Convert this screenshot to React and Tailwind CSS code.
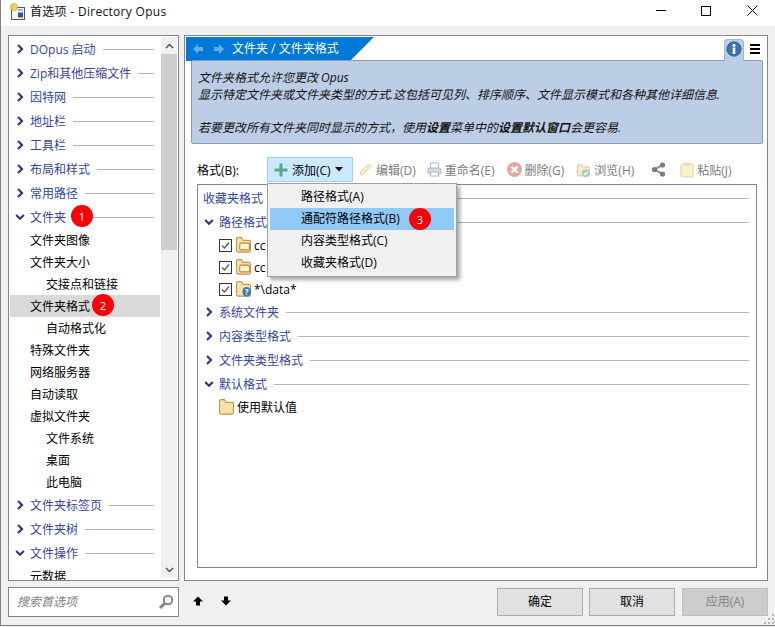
import React from "react";

const Chevron = ({ open }) => (
  <svg width="10" height="10" viewBox="0 0 10 10" className="shrink-0">
    {open ? (
      <path d="M1.2 3 L5 6.8 L8.8 3" fill="none" stroke="#2a3b80" strokeWidth="2.2" />
    ) : (
      <path d="M3 1 L7 5 L3 9" fill="none" stroke="#2a3b80" strokeWidth="2.2" />
    )}
  </svg>
);

const Group = ({ label, open, cls = "" }) => (
  <div className={"flex items-center h-[24px] " + cls}>
    <span className="w-[21px] flex justify-center"><Chevron open={open} /></span>
    <span className="text-[#34459b] whitespace-nowrap pt-[2px]">{label}</span>
    <span className="flex-1 h-px bg-[#aab8d6] ml-[7px]" />
  </div>
);

const Badge = ({ n, cls }) => (
  <span className={"absolute w-[22px] h-[22px] rounded-full bg-[#fb0007] text-white text-[11px] flex items-center justify-center " + cls}>{n}</span>
);

const FolderPath = "M1.5 3.5 V13 a1.2 1.2 0 0 0 1.2 1.2 H13.3 a1.2 1.2 0 0 0 1.2-1.2 V6 a1.2 1.2 0 0 0-1.2-1.2 H7.5 L6 2.5 H2.5 a1 1 0 0 0-1 1z";

const Folder = ({ inner, q }) => (
  <svg width="15" height="16" viewBox="1 2 14 13" className="shrink-0" preserveAspectRatio="none">
    <path d={FolderPath} fill="#f9e2a9" stroke="#c8954a" />
    {inner && <rect x="4.5" y="7" width="9" height="5.5" rx="1" fill="#fff3d2" stroke="#b9883e" />}
    {q && (
      <>
        <circle cx="11" cy="10.8" r="4" fill="#3c78b0" />
        <text x="11" y="13.6" fontSize="7.5" fontWeight="700" textAnchor="middle" fill="#fff">?</text>
      </>
    )}
  </svg>
);

const Check = () => (
  <span className="w-[13px] h-[13px] border border-[#333] bg-white flex items-center justify-center shrink-0">
    <svg width="11" height="11" viewBox="0 0 11 11"><path d="M2 5.5 L4.5 8 L9 2.5" fill="none" stroke="#555" strokeWidth="1.2" /></svg>
  </span>
);

const CheckRow = ({ text, inner, q }) => (
  <div className="flex items-center h-[22px] pl-[21px]">
    <Check />
    <span className="ml-[4px] flex"><Folder inner={inner} q={q} /></span>
    <span className="ml-[3px] text-black whitespace-nowrap pt-[2px]">{text}</span>
  </div>
);

const Tool = ({ icon, label, cls = "" }) => (
  <div className={"flex items-center gap-[3px] text-[#7c7c7c] whitespace-nowrap " + cls}>
    <span className="w-[15px] h-[16px] flex items-center justify-center">{icon}</span>
    {label && <span className="pt-[2px]">{label}</span>}
  </div>
);

const Btn = ({ label, disabled, cls = "" }) => (
  <div className={"w-[86px] h-[28px] border flex items-center justify-center " + cls + " " + (disabled ? "bg-[#cccccc] border-[#bfbfbf] text-[#838383]" : "bg-[#e1e1e1] border-[#adadad] text-black")}>{label}</div>
);

const item = "flex items-center h-[22px] pt-[2px] whitespace-nowrap text-black ";

export default function App() {
  return (
    <div className="w-[775px] h-[627px] overflow-hidden bg-[#f0f0f0] font-['Open_Sans','Noto_Sans_CJK_SC',sans-serif] text-[12px] leading-none">
      <div className="h-[626px] relative border-l border-b border-[#7f7f7f] flex flex-col">
        {/* title bar */}
        <div className="h-[26px] bg-white flex items-center shrink-0 pb-[2px]">
          <svg width="18" height="18" viewBox="0 0 18 18" className="ml-[8px]">
            <rect x="2.5" y="4.5" width="13" height="12" fill="#f4f4f4" stroke="#555" />
            <rect x="9" y="9.5" width="5" height="5" fill="#2c5f9e" />
            <rect x="9" y="6" width="5" height="2" fill="#9db8d8" />
            <circle cx="5" cy="4" r="3.6" fill="#f0cf5c" stroke="#b69a3a" strokeWidth="0.6" />
          </svg>
          <span className="ml-[3px] text-[#111] tracking-[0.3px]">首选项 - Directory Opus</span>
          <div className="ml-auto flex items-center mb-[3px]">
            <span className="w-[10px] h-px bg-black mr-[35px]" />
            <span className="w-[10px] h-[10px] border border-black mr-[36px]" />
            <svg width="11" height="11" viewBox="0 0 11 11" className="mr-[17px]"><path d="M0.5 0.5 L10.5 10.5 M10.5 0.5 L0.5 10.5" stroke="#111" strokeWidth="1" /></svg>
          </div>
        </div>

        {/* panels */}
        <div className="flex mt-[9px] ml-[7px] gap-[5px] h-[546px] shrink-0">
          {/* left tree */}
          <div className="w-[171px] h-full border border-[#82878f] bg-white flex overflow-hidden">
            <div className="w-[152px] shrink-0 pt-px">
              {["DOpus 启动", "Zip和其他压缩文件", "因特网", "地址栏", "工具栏", "布局和样式", "常用路径"].map((t) => (
                <Group key={t} label={t} cls="pr-[7px]" />
              ))}
              <Group label="文件夹" open cls="pr-[7px]" />
              <div className={item + "pl-[21px]"}>文件夹图像</div>
              <div className={item + "pl-[21px]"}>文件夹大小</div>
              <div className={item + "pl-[37px]"}>交接点和链接</div>
              <div className={item + "pl-[20px] ml-px bg-[#d9d9d9] w-[150px]"}>文件夹格式</div>
              <div className={item + "pl-[37px]"}>自动格式化</div>
              <div className={item + "pl-[21px]"}>特殊文件夹</div>
              <div className={item + "pl-[21px]"}>网络服务器</div>
              <div className={item + "pl-[21px]"}>自动读取</div>
              <div className={item + "pl-[21px]"}>虚拟文件夹</div>
              <div className={item + "pl-[37px]"}>文件系统</div>
              <div className={item + "pl-[37px]"}>桌面</div>
              <div className={item + "pl-[37px]"}>此电脑</div>
              <Group label="文件夹标签页" cls="pr-[7px]" />
              <Group label="文件夹树" cls="pr-[7px]" />
              <Group label="文件操作" open cls="pr-[7px]" />
              <div className={item + "pl-[21px]"}>元数据</div>
            </div>
            <div className="w-[16px] shrink-0 mt-px mb-[2px] bg-[#f0f0f0] flex flex-col">
              <div className="h-[17px] flex items-center justify-center">
                <svg width="9" height="6" viewBox="0 0 9 6"><path d="M1 5 L4.5 1.5 L8 5" fill="none" stroke="#555" strokeWidth="1.5" /></svg>
              </div>
              <div className="h-[196px] bg-[#cdcdcd]" />
              <div className="mt-auto h-[17px] flex items-center justify-center">
                <svg width="9" height="6" viewBox="0 0 9 6"><path d="M1 1 L4.5 4.5 L8 1" fill="none" stroke="#555" strokeWidth="1.5" /></svg>
              </div>
            </div>
          </div>

          {/* right panel */}
          <div className="w-[584px] h-full border border-[#82878f] bg-white flex flex-col">
            <div className="h-[24px] mt-px flex items-stretch shrink-0">
              <div className="ml-px w-[188px] h-[24px] bg-[#0078d7] flex items-center [clip-path:polygon(0_0,100%_0,calc(100%-24px)_100%,0_100%)]">
                <svg width="12" height="12" viewBox="0 0 12 12" className="ml-[6px]"><path d="M6 1 L1 6 L6 11 V8 H11 V4 H6z" fill="#66aee8" /></svg>
                <svg width="12" height="12" viewBox="0 0 12 12" className="ml-[9px]"><path d="M6 1 L11 6 L6 11 V8 H1 V4 H6z" fill="#66aee8" /></svg>
                <span className="ml-[7px] text-white whitespace-nowrap">文件夹 / 文件夹格式</span>
              </div>
              <div className="ml-auto w-[20px] h-[22px] mt-[2px] -mb-px relative z-10 bg-[#bccde6] border border-b-0 border-[#a8b6cf] rounded-t-[4px] flex items-start justify-center pt-px">
                <svg width="16" height="16" viewBox="0 0 16 16">
                  <circle cx="8" cy="8" r="7.2" fill="#3a73ad" stroke="#26507f" strokeWidth="0.8" />
                  <rect x="6.7" y="6.5" width="2.6" height="6.5" fill="#fff" />
                  <circle cx="8" cy="4.3" r="1.5" fill="#fff" />
                </svg>
              </div>
              <div className="w-[22px] flex flex-col items-center justify-center gap-[2px] mr-px">
                <span className="w-[10px] h-[2px] bg-black" />
                <span className="w-[10px] h-[2px] bg-black" />
                <span className="w-[10px] h-[2px] bg-black" />
              </div>
            </div>
            <div className="ml-[6px] mr-[4px] -mt-px h-[84px] relative bg-[#bccde6] border border-[#8d99b0] rounded-[2px] pl-[6px] pt-[9px] italic text-[#111] leading-[16.6px] shrink-0">
              <div>文件夹格式允许您更改 Opus</div>
              <div>显示特定文件夹或文件夹类型的方式.这包括可见列、排序顺序、文件显示模式和各种其他详细信息.</div>
              <div className="h-[16.6px]" />
              <div>若要更改所有文件夹同时显示的方式，使用<b>设置</b>菜单中的<b>设置默认窗口</b>会更容易.</div>
            </div>

            <div className="flex items-center h-[25px] mt-[13px] ml-[12px] shrink-0">
              <span className="w-[70px] text-black pt-[2px]">格式(B):</span>
              <div className="w-[86px] h-[25px] bg-[#cce8ff] border border-[#99d1ff] flex items-center pl-[6px] text-black whitespace-nowrap">
                <svg width="14" height="14" viewBox="0 0 14 14"><path d="M5.5 0.5 H8.5 V5.5 H13.5 V8.5 H8.5 V13.5 H5.5 V8.5 H0.5 V5.5 H5.5z" fill="#59a68f" /></svg>
                <span className="ml-[4px] pt-[2px]">添加(C)</span>
                <svg width="8" height="5" viewBox="0 0 8 5" className="ml-[4px]"><path d="M0 0 H8 L4 4.5z" fill="#111" /></svg>
              </div>
              <Tool cls="ml-[5px]" label="编辑(D)" icon={<svg width="15" height="15" viewBox="0 0 15 15"><path d="M2 13 L3 9.5 L10.5 2 L13 4.5 L5.5 12z" fill="#fbeccb" stroke="#e0cfa8" /></svg>} />
              <Tool cls="ml-[11px]" label="重命名(E)" icon={<svg width="15" height="15" viewBox="0 0 15 15"><rect x="3.5" y="1" width="8" height="6" fill="#fff" stroke="#a9b8cc" /><rect x="1" y="6" width="13" height="6" rx="1.5" fill="#cfd9e6" stroke="#a9b8cc" /><rect x="3.5" y="10" width="8" height="4" fill="#fff" stroke="#a9b8cc" /></svg>} />
              <Tool cls="ml-[12px]" label="删除(G)" icon={<svg width="15" height="15" viewBox="0 0 15 15"><circle cx="7.5" cy="7.5" r="7.5" fill="#e5a79f" /><path d="M4.5 4.5 L10.5 10.5 M10.5 4.5 L4.5 10.5" stroke="#fff" strokeWidth="2.2" /></svg>} />
              <Tool cls="ml-[12px]" label="浏览(H)" icon={<svg width="15" height="16" viewBox="0 0 16 16"><path d={FolderPath} fill="#fbeccb" stroke="#e0c68f" /><circle cx="10.5" cy="11.5" r="4.3" fill="#9fd4bd" /><path d="M8.5 11.5 L10 13 L12.5 10" fill="none" stroke="#fff" strokeWidth="1.1" /></svg>} />
              <Tool cls="ml-[17px]" icon={<svg width="15" height="15" viewBox="0 0 15 15"><path d="M11.5 3 L3.5 7.5 L11.5 12" fill="none" stroke="#7a7a7a" strokeWidth="1.5" /><circle cx="11.5" cy="3" r="2.6" fill="#7a7a7a" /><circle cx="3.5" cy="7.5" r="2.6" fill="#7a7a7a" /><circle cx="11.5" cy="12" r="2.6" fill="#7a7a7a" /></svg>} />
              <Tool cls="ml-[13px]" label="粘贴(J)" icon={<svg width="14" height="16" viewBox="0 0 14 16"><rect x="1" y="2" width="12" height="13" rx="1.5" fill="#fdf0cd" stroke="#e3cfa0" /><rect x="4" y="0.5" width="6" height="3" fill="#eedcb3" /></svg>} />
            </div>

            {/* list */}
            <div className="ml-[12px] mt-[2px] w-[560px] h-[384px] border border-[#82878f] shrink-0 pr-[7px] pt-px">
              <div className="flex items-center h-[24px] pl-[5px]">
                <span className="text-[#34459b] pt-[2px]">收藏夹格式</span>
                <span className="flex-1 h-px bg-[#aab8d6] ml-[7px]" />
              </div>
              <Group label="路径格式" open />
              <CheckRow text="cc" inner />
              <CheckRow text="cc" inner />
              <CheckRow text="*\data*" q />
              <Group label="系统文件夹" />
              <Group label="内容类型格式" />
              <Group label="文件夹类型格式" />
              <Group label="默认格式" open />
              <div className="flex items-center h-[22px] pl-[21px] text-black"><Folder /><span className="ml-[3px] pt-[2px]">使用默认值</span></div>
            </div>
          </div>
        </div>

        {/* footer */}
        <div className="flex items-start ml-[7px] mt-[6px]">
          <div className="w-[171px] h-[30px] bg-white border border-[#82878f] flex items-center pl-[8px] italic text-[#7f7f7f]">
            <span>搜索首选项</span>
            <svg width="16" height="16" viewBox="0 0 16 16" className="ml-auto mr-[4px]"><circle cx="10" cy="6" r="4.2" fill="none" stroke="#858585" strokeWidth="2" /><path d="M7 9 L2 14" stroke="#858585" strokeWidth="3" /></svg>
          </div>
          <svg width="10" height="10" viewBox="0 0 10 10" className="ml-[14px] mt-[9px]"><path d="M5 0.5 L10 5.5 H7 V9.5 H3 V5.5 H0z" fill="#000" /></svg>
          <svg width="10" height="10" viewBox="0 0 10 10" className="ml-[18px] mt-[9px]"><path d="M5 9.5 L10 4.5 H7 V0.5 H3 V4.5 H0z" fill="#000" /></svg>
          <div className="ml-auto flex mr-[7px] mt-px">
            <Btn label="确定" />
            <Btn label="取消" cls="ml-[6px]" />
            <Btn label="应用(A)" disabled cls="ml-[7px]" />
          </div>
        </div>

        {/* resize grip */}
        <svg width="12" height="12" viewBox="0 0 12 12" className="absolute right-0 bottom-0">
          <g fill="#b5b5b5">
            <rect x="9" y="1" width="2" height="2" /><rect x="5" y="5" width="2" height="2" /><rect x="9" y="5" width="2" height="2" />
            <rect x="1" y="9" width="2" height="2" /><rect x="5" y="9" width="2" height="2" /><rect x="9" y="9" width="2" height="2" />
          </g>
        </svg>

        {/* overlays */}
        <Badge n="1" cls="left-[70px] top-[205px]" />
        <Badge n="2" cls="left-[91px] top-[294px]" />

        {/* dropdown menu */}
        <div className="absolute left-[266px] top-[183px] w-[190px] h-[94px] bg-[#f0f0f0] border border-[#a0a0a0] shadow-[3px_3px_4px_rgba(0,0,0,0.35)] pt-[2px] px-[2px] text-black">
          <div className="flex items-center h-[22px] pl-[31px]">路径格式(A)</div>
          <div className="relative flex items-center h-[22px] pl-[31px] bg-[#91c9f7]">
            通配符路径格式(B)
            <Badge n="3" cls="left-[139px] top-0" />
          </div>
          <div className="flex items-center h-[22px] pl-[31px]">内容类型格式(C)</div>
          <div className="flex items-center h-[22px] pl-[31px]">收藏夹格式(D)</div>
        </div>
      </div>
    </div>
  );
}
